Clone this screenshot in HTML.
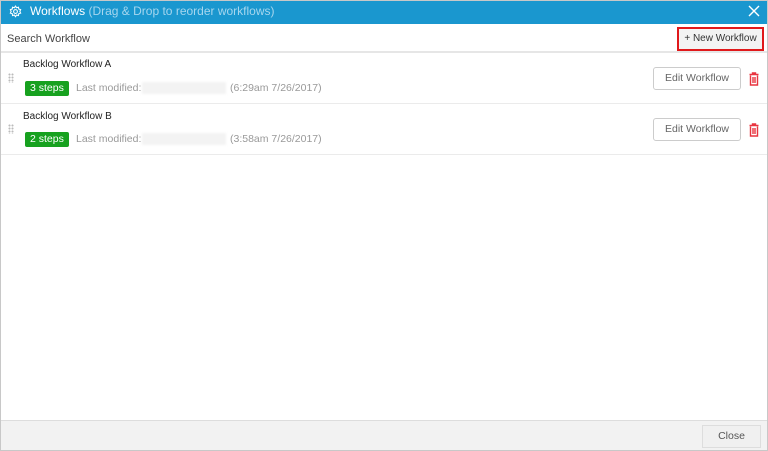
<!DOCTYPE html>
<html><head><style>
*{box-sizing:border-box;margin:0;padding:0}
body{width:768px;height:451px;overflow:hidden;background:#fff;font-family:"Liberation Sans",sans-serif;position:relative}
.abs{position:absolute}
.hdr{left:0;top:0;width:768px;height:24px;background:#1a97cf;color:#fff;font-size:12px}
.search{left:0;top:24px;width:768px;height:29px;border-bottom:2px solid #e6e6e6;font-size:11px;color:#444}
.row{left:0;width:768px;height:51px;border-bottom:1px solid #ebebeb}
.title{font-size:10px;color:#222}
.badge{background:#17a11f;color:#fff;font-size:10.5px;border-radius:2px;padding:1px 5px;height:15px;line-height:13px}
.lm{font-size:10.5px;color:#999}
.blur{background:#f3f3f3;width:84px;height:12px;filter:blur(1px)}
.edit{width:88px;height:23px;border:1px solid #ccc;border-radius:3px;font-size:10.5px;color:#666;text-align:center;line-height:21px}
.foot{left:0;top:420px;width:768px;height:31px;background:#f2f2f2;border-top:1px solid #ddd}
.frame{left:0;top:0;width:768px;height:451px;border:1px solid #c8c8c8;pointer-events:none}
</style></head><body>
<div class="abs hdr">
<svg class="abs" style="left:9px;top:5px" width="13" height="13" viewBox="0 0 24 24" fill="none" stroke="#fff" stroke-width="2"><circle cx="12" cy="12" r="3.5"/><path d="M12 2l2 3 3.5-1 .5 3.5 3.5 1-1.5 3.5 1.5 3-3.5 1-.5 3.5-3.5-1-2 3-2-3-3.5 1-.5-3.5-3.5-1 1.5-3-1.5-3.5 3.5-1 .5-3.5 3.5 1z"/></svg>
<span class="abs" style="left:30px;top:4px">Workflows <span style="color:#a6d6ee">(Drag &amp; Drop to reorder workflows)</span></span>
<svg class="abs" style="left:748px;top:5px" width="12" height="12" viewBox="0 0 12 12" stroke="#fff" stroke-width="1.4"><path d="M1 1L11 11M11 1L1 11"/></svg>
</div>
<div class="abs search"><span class="abs" style="left:7px;top:9px">Search Workflow</span>
<div class="abs" style="left:677px;top:3px;width:87px;height:24px;border:2px solid #e0191b;background:#f3f3f3;font-size:10px;color:#333;text-align:center;line-height:20px">+ New Workflow</div></div>

<div class="abs row" style="top:53px">
<div class="abs" style="left:8px;top:20px;width:6px;height:10px;background:radial-gradient(circle,#bbb 0.8px,transparent 1.2px) 0 0/3px 3px"></div>
<div class="abs title" style="left:23px;top:6px">Backlog Workflow A</div>
<div class="abs badge" style="left:25px;top:28px">3 steps</div>
<div class="abs lm" style="left:76px;top:29px">Last modified:</div>
<div class="abs blur" style="left:142px;top:29px"></div>
<div class="abs lm" style="left:230px;top:29px">(6:29am 7/26/2017)</div>
<div class="abs edit" style="left:653px;top:14px">Edit Workflow</div>
<svg class="abs" style="left:749px;top:19px" width="10" height="14" viewBox="0 0 10 14" fill="none" stroke="#e8343f" stroke-width="1.4"><path d="M0.5 2.5h9M3.5 2.5V1h3v1.5M1.5 3.5v9.5h7V3.5M4 5v6M6 5v6"/></svg>
</div>
<div class="abs row" style="top:104px">
<div class="abs" style="left:8px;top:20px;width:6px;height:10px;background:radial-gradient(circle,#bbb 0.8px,transparent 1.2px) 0 0/3px 3px"></div>
<div class="abs title" style="left:23px;top:7px">Backlog Workflow B</div>
<div class="abs badge" style="left:25px;top:28px">2 steps</div>
<div class="abs lm" style="left:76px;top:29px">Last modified:</div>
<div class="abs blur" style="left:142px;top:29px"></div>
<div class="abs lm" style="left:230px;top:29px">(3:58am 7/26/2017)</div>
<div class="abs edit" style="left:653px;top:14px">Edit Workflow</div>
<svg class="abs" style="left:749px;top:19px" width="10" height="14" viewBox="0 0 10 14" fill="none" stroke="#e8343f" stroke-width="1.4"><path d="M0.5 2.5h9M3.5 2.5V1h3v1.5M1.5 3.5v9.5h7V3.5M4 5v6M6 5v6"/></svg>
</div>
<div class="abs foot"><div class="abs" style="left:702px;top:4px;width:59px;height:23px;border:1px solid #ddd;background:#f0f0f0;font-size:10.5px;color:#555;text-align:center;line-height:21px">Close</div></div>
<div class="abs frame"></div>
</body></html>
